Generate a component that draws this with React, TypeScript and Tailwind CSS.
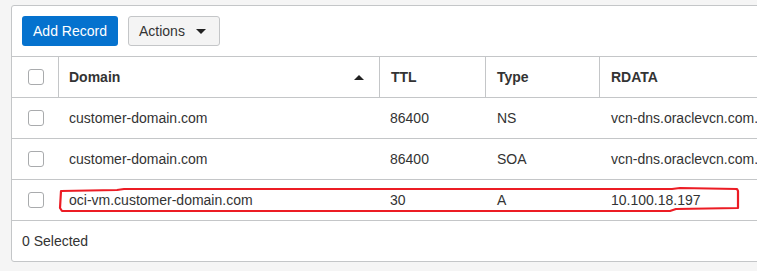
import React from "react";

const rows = [
  { d: "customer-domain.com", ttl: "86400", type: "NS", r: "vcn-dns.oraclevcn.com." },
  { d: "customer-domain.com", ttl: "86400", type: "SOA", r: "vcn-dns.oraclevcn.com." },
  { d: "oci-vm.customer-domain.com", ttl: "30", type: "A", r: "10.100.18.197" },
];

function Box() {
  return <div className="w-[16px] h-[16px] rounded-[3px] border border-[#a9abad] bg-white" />;
}

export default function App() {
  return (
    <div
      className="relative w-[757px] h-[271px] overflow-hidden bg-[#f5f5f5] text-[14px] text-[#333333]"
      style={{ fontFamily: '"Liberation Sans", Arial, sans-serif' }}
    >
      <div className="ml-[11px] mt-[5px] w-[800px] h-[257px] bg-white border border-[#c4c6c8] rounded-[3px] flex flex-col">
        <div className="h-[50px] flex items-start pt-[10px] pl-[10px] gap-[10px]">
          <button className="h-[30px] w-[96px] rounded-[3px] bg-[#0572ce] text-white flex items-center justify-center">
            Add Record
          </button>
          <button className="h-[30px] w-[92px] rounded-[3px] bg-[#f4f4f4] border border-[#c4c6c8] flex items-center pl-[10px] text-[#333]">
            Actions
            <svg width="10" height="5" viewBox="0 0 10 5" className="ml-[11px]">
              <path d="M0 0 L10 0 L5 5 Z" fill="#222" />
            </svg>
          </button>
        </div>
        <div className="h-[41px] border-t border-[#c4c6c8] flex font-bold">
          <div className="w-[46px] flex items-center justify-center pl-[1px]"><Box /></div>
          <div className="w-[321px] border-l border-[#c4c6c8] flex items-center pl-[10px] pr-[15px] justify-between">
            <span>Domain</span>
            <svg width="10" height="5" viewBox="0 0 10 5">
              <path d="M0 5 L10 5 L5 0 Z" fill="#222" />
            </svg>
          </div>
          <div className="w-[106px] border-l border-[#c4c6c8] flex items-center pl-[11px]">TTL</div>
          <div className="w-[114px] border-l border-[#c4c6c8] flex items-center pl-[11px]">Type</div>
          <div className="flex-1 border-l border-[#c4c6c8] flex items-center pl-[11px]">RDATA</div>
        </div>
        {rows.map((r, i) => (
          <div key={i} className="h-[41px] border-t border-[#c4c6c8] flex">
            <div className="w-[46px] flex items-center justify-center pl-[1px]"><Box /></div>
            <div className="w-[321px] flex items-center pl-[11px]">{r.d}</div>
            <div className="w-[106px] flex items-center pl-[11px]">{r.ttl}</div>
            <div className="w-[114px] flex items-center pl-[12px]">{r.type}</div>
            <div className="flex-1 flex items-center pl-[12px]">{r.r}</div>
          </div>
        ))}
        <div className="h-[41px] border-t border-[#c4c6c8] flex items-center pl-[10px]">0 Selected</div>
      </div>
      <svg className="absolute left-0 top-0 pointer-events-none" width="757" height="271">
        <path
          d="M61 191 L117 190 L124 189 L672 189 L680 188 L737 189 L738 191 L738 208 L676 209 L670 211 L62 211 L60 208 Z"
          fill="none"
          stroke="#ec1c24"
          strokeWidth="2.2"
          strokeLinejoin="round"
        />
      </svg>
    </div>
  );
}
